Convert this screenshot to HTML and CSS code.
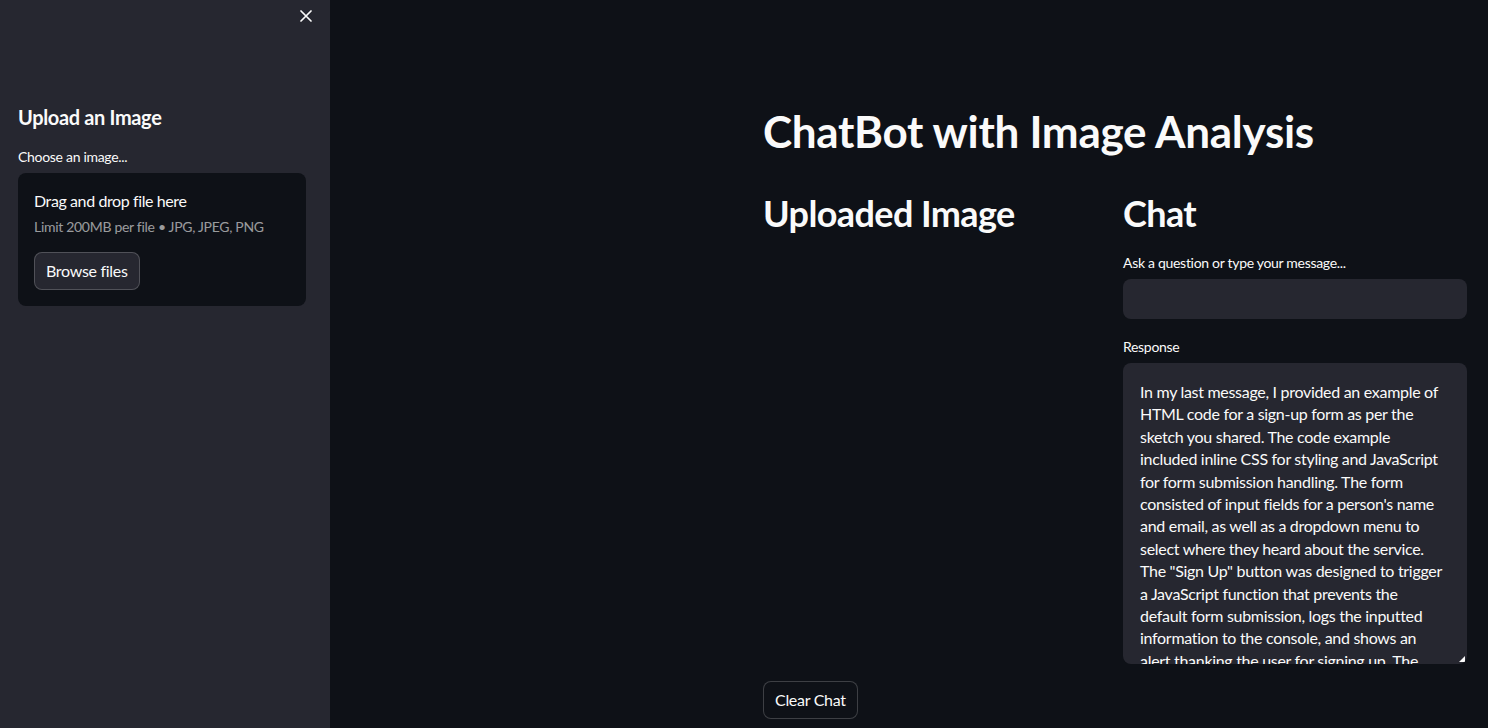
FILE: index.html
```html
<!DOCTYPE html>
<html lang="en">
<head>
<meta charset="utf-8">
<title>ChatBot with Image Analysis</title>
<link rel="stylesheet" href="styles.css">
</head>
<body>
<div class="app">
  <aside class="sidebar">
    <div class="sidebar-top">
      <button class="close-btn" aria-label="Close sidebar">
        <svg width="12" height="12" viewBox="0 0 12 12"><path d="M1 1 L11 11 M11 1 L1 11" stroke="#fafafa" stroke-width="1.7" stroke-linecap="round"/></svg>
      </button>
    </div>
    <h3 class="side-title">Upload an Image</h3>
    <div class="field-label">Choose an image...</div>
    <div class="dropzone">
      <div class="dz-title">Drag and drop file here</div>
      <div class="dz-hint">Limit 200MB per file • JPG, JPEG, PNG</div>
      <button class="btn btn-side">Browse files</button>
    </div>
  </aside>
  <main class="main">
    <div class="content">
      <h1 class="title">ChatBot with Image Analysis</h1>
      <div class="columns">
        <section class="col">
          <h2 class="sub">Uploaded Image</h2>
        </section>
        <section class="col">
          <h2 class="sub">Chat</h2>
          <div class="field-label label-chat">Ask a question or type your message...</div>
          <div class="input"></div>
          <div class="field-label label-resp">Response</div>
          <div class="textarea"><div class="ta-text">In my last message, I provided an example of
HTML code for a sign-up form as per the
sketch you shared. The code example
included inline CSS for styling and JavaScript
for form submission handling. The form
consisted of input fields for a person's name
and email, as well as a dropdown menu to
select where they heard about the service.
The "Sign Up" button was designed to trigger
a JavaScript function that prevents the
default form submission, logs the inputted
information to the console, and shows an
alert thanking the user for signing up. The</div><span class="resize"></span></div>
        </section>
      </div>
      <button class="btn btn-main">Clear Chat</button>
    </div>
  </main>
</div>
</body>
</html>
```
FILE: styles.css
```css
* { box-sizing: border-box; }
html, body { margin: 0; padding: 0; height: 100%; }
body {
  background: #0e1117;
  color: #fafafa;
  font-family: "Lato", "Noto Sans", sans-serif;
  letter-spacing: -0.3px;
  overflow: hidden;
}
.app { display: flex; height: 728px; }
.sidebar {
  width: 330px;
  flex: 0 0 330px;
  background: #262730;
  padding: 0 24px 0 18px;
}
.sidebar-top { display: flex; justify-content: flex-end; height: 34px; padding-top: 10px; margin-right: -6px; }
.close-btn {
  background: none; border: 0; padding: 0; width: 12px; height: 12px; cursor: pointer; display: flex;
}
.side-title {
  margin: 69px 0 0;
  font-size: 20px;
  font-weight: 700;
  line-height: 28px;
  letter-spacing: -0.35px;
}
.field-label {
  font-size: 14px;
  line-height: 20px;
  margin-top: 16px;
}
.dropzone {
  margin-top: 6px;
  background: #0e1117;
  border-radius: 8px;
  padding: 16px;
  height: 133px;
}
.dz-title { font-size: 16px; line-height: 24px; letter-spacing: -0.4px; }
.dz-hint { font-size: 14px; line-height: 20px; color: rgba(250,250,250,0.6); margin-top: 4px; }
.btn {
  font-family: inherit;
  letter-spacing: inherit;
  color: #fafafa;
  font-size: 16px;
  border: 1px solid rgba(250,250,250,0.2);
  border-radius: 8px;
  padding: 0 11px 2px;
  height: 38px;
  white-space: nowrap;
  cursor: pointer;
}
.btn-side { background: #262730; margin-top: 15px; }
.main { flex: 1; display: flex; justify-content: flex-end; padding-right: 21px; }
.content { width: 704px; }
.title {
  margin: 105px 0 0;
  font-size: 44px;
  font-weight: 700;
  line-height: 52px;
  letter-spacing: -0.3px;
}
.columns { display: flex; gap: 16px; margin-top: 34px; }
.col { flex: 1; min-width: 0; }
.sub {
  margin: 0;
  font-size: 36px;
  font-weight: 700;
  line-height: 44px;
  letter-spacing: -0.6px;
}
.label-chat { margin-top: 18px; }
.input {
  margin-top: 6px;
  height: 40px;
  background: #262730;
  border-radius: 8px;
}
.label-resp { margin-top: 18px; }
.textarea {
  position: relative;
  margin-top: 6px;
  height: 301px;
  background: #262730;
  border-radius: 8px;
  padding: 18px 16px 0 17px;
  overflow: hidden;
}
.ta-text {
  white-space: pre;
  font-size: 16px;
  line-height: 22.4px;
}
.resize {
  position: absolute;
  right: 2px; bottom: 2px;
  width: 0; height: 0;
  border-left: 6px solid transparent;
  border-bottom: 6px solid #fafafa;
}
.btn-main { background: #0e1117; margin-top: 17px; }
```
